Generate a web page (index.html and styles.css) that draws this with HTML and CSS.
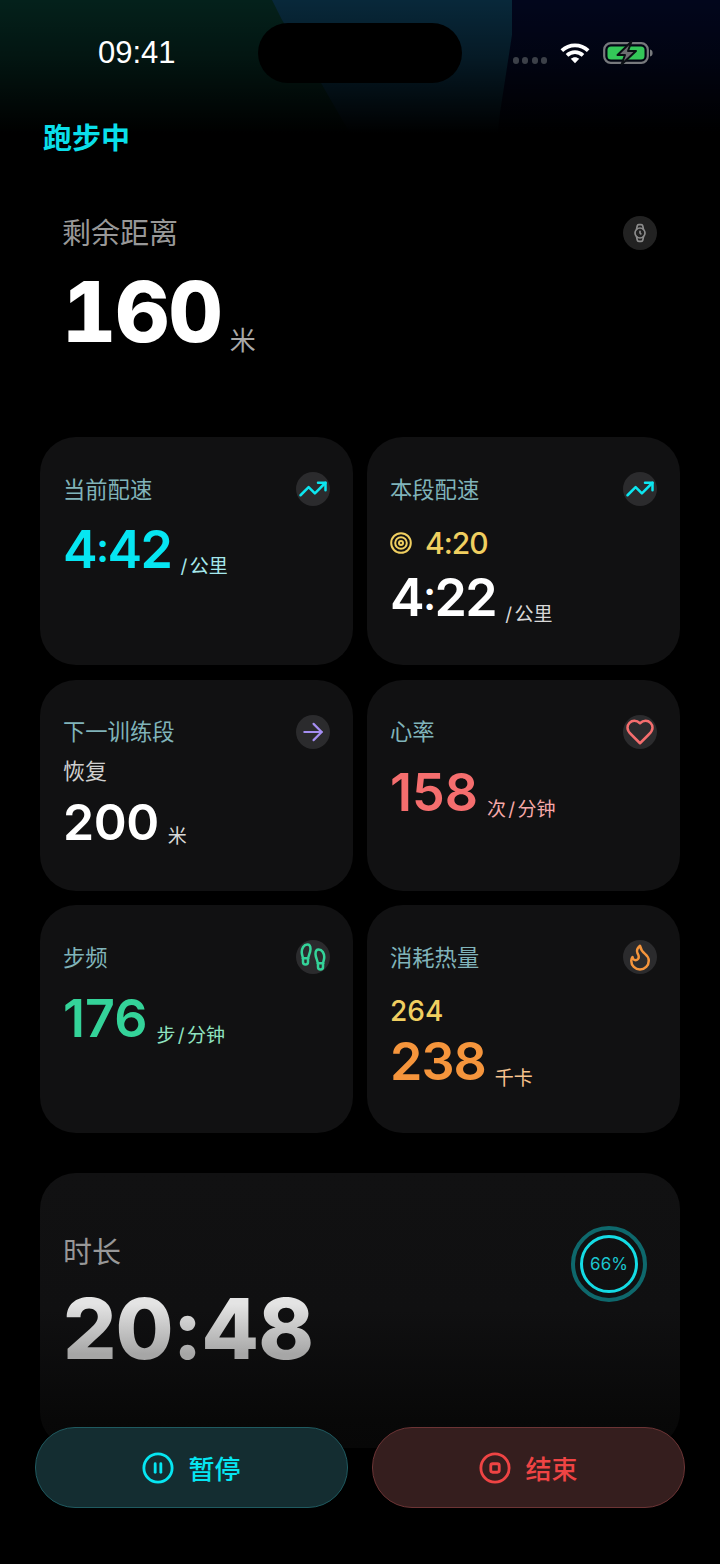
FILE: index.html
```html
<!DOCTYPE html>
<html lang="zh-CN">
<head>
    <meta charset="UTF-8">
    <title>跑步中</title>
    <link rel="stylesheet" href="styles.css">
</head>
<body>
<div class="app">
    <!--顶部背景-->
    <div class="glow"><div class="glow-mid"></div><div class="glow-fade"></div></div>

    <div class="status">
        <span class="time">09:41</span>
        <div class="island"></div>
        <div class="status-right">
            <div class="dots"><i></i><i></i><i></i><i></i></div>
            <svg class="wifi" width="32" height="24" viewBox="0 0 34 24">
                <path d="M3 9.500C11 2 23 2 31 9.500" />
                <path d="M8.500 14.500C13.500 10 20.500 10 25.500 14.500" />
                <path class="wifi-tip" d="M12.500 18.200C15.200 15.800 18.800 15.800 21.500 18.200L17 23Z" />
            </svg>
            <svg class="battery" width="50" height="26" viewBox="0 0 50 26">
                <rect x="1.200" y="3.200" width="43.600" height="19.600" rx="6.500" fill="none" stroke="#77797c" stroke-width="2.200" />
                <rect x="4.500" y="6.500" width="37" height="13" rx="3.500" fill="#34c759" />
                <path d="M47 9.500c2 .6 2.600 1.800 2.600 3.500s-.6 2.900-2.600 3.500z" fill="#77797c" />
                <path d="M28.500 1.500L14.500 15h7.500l-3.500 9.500L33 11h-8z" fill="#6c6e70" stroke="#0b0f14" stroke-width="2" stroke-linejoin="round" />
            </svg>
        </div>
    </div>

    <h1 class="title">跑步中</h1>

    <section class="hero">
        <div class="hero-head">
            <span class="hero-label">剩余距离</span>
            <span class="ico ico-dim">
                <svg width="20" height="20" viewBox="0 0 24 24" class="line line-gray"><circle cx="12" cy="12" r="6"/><path d="M12 10v2l1 1"/><path d="M16.130 7.660l-.81-4.050a2 2 0 0 0-2-1.610h-2.680a2 2 0 0 0-2 1.610l-.78 4.050"/><path d="M7.880 16.360l.8 4a2 2 0 0 0 2 1.610h2.720a2 2 0 0 0 2-1.610l.81-4.050"/></svg>
            </span>
        </div>
        <div class="hero-value"><b>160</b><span>米</span></div>
    </section>

    <div class="grid">
        <div class="card">
            <div class="card-head">
                <span class="label">当前配速</span>
                <span class="ico"><svg width="30" height="30" viewBox="0 0 24 24" class="line line-cyan"><path d="M22 7l-8.500 8.500-5-5L2 17"/><path d="M16 7h6v6"/></svg></span>
            </div>
            <div class="val val-tight cyan gap-12">4<i class="colon">:</i>42<small class="cyan-soft">/ 公里</small></div>
        </div>
        <div class="card">
            <div class="card-head">
                <span class="label">本段配速</span>
                <span class="ico"><svg width="30" height="30" viewBox="0 0 24 24" class="line line-cyan"><path d="M22 7l-8.500 8.500-5-5L2 17"/><path d="M16 7h6v6"/></svg></span>
            </div>
            <div class="target">
                <svg width="22" height="22" viewBox="0 0 22 22" class="line line-yellow"><circle cx="11" cy="11" r="9.800"/><circle cx="11" cy="11" r="5.800"/><circle cx="11" cy="11" r="2"/></svg>
                <span>4:20</span>
            </div>
            <div class="val val-tight white gap-5">4<i class="colon">:</i>22<small class="white-soft">/ 公里</small></div>
        </div>
        <div class="card">
            <div class="card-head">
                <span class="label">下一训练段</span>
                <span class="ico"><svg width="26" height="26" viewBox="0 0 24 24" class="line line-purple"><path d="M4 12h16"/><path d="M12.500 4.500L20 12l-7.500 7.500"/></svg></span>
            </div>
            <div class="next-name">恢复</div>
            <div class="val val-next white">200<small class="white-soft">米</small></div>
        </div>
        <div class="card">
            <div class="card-head">
                <span class="label">心率</span>
                <span class="ico"><svg width="30" height="30" viewBox="0 0 24 24" class="line line-red"><path d="M19 14c1.490-1.460 3-3.210 3-5.500A5.500 5.500 0 0 0 16.500 3c-1.760 0-3 .5-4.500 2-1.500-1.500-2.740-2-4.500-2A5.500 5.500 0 0 0 2 8.500c0 2.300 1.500 4.050 3 5.500l7 7Z"/></svg></span>
            </div>
            <div class="val red gap-14">158<small class="red-soft">次 / 分钟</small></div>
        </div>
        <div class="card">
            <div class="card-head">
                <span class="label">步频</span>
                <span class="ico"><svg width="30" height="30" viewBox="0 0 24 24" class="line line-green"><path d="M4 16v-2.380C4 11.500 2.970 10.500 3 8c.03-2.720 1.490-6 4.500-6C9.370 2 10 3.800 10 5.500c0 3.110-2 5.660-2 8.680V16a2 2 0 1 1-4 0Z"/><path d="M20 20v-2.380c0-2.120 1.030-3.120 1-5.620-.03-2.720-1.490-6-4.500-6C14.630 6 14 7.800 14 9.500c0 3.110 2 5.660 2 8.680V20a2 2 0 1 0 4 0Z"/><path d="M16 17h4"/><path d="M4 13h4"/></svg></span>
            </div>
            <div class="val green gap-15">176<small class="green-soft">步 / 分钟</small></div>
        </div>
        <div class="card">
            <div class="card-head">
                <span class="label">消耗热量</span>
                <span class="ico"><svg width="30" height="30" viewBox="0 0 24 24" class="line line-orange"><path d="M8.500 14.500A2.500 2.500 0 0 0 11 12c0-1.380-.5-2-1-3-1.072-2.143-.224-4.054 2-6 .5 2.500 2 4.900 4 6.500 2 1.600 3 3.500 3 5.500a7 7 0 1 1-14 0c0-1.153.433-2.294 1-3a2.500 2.500 0 0 0 2.500 2.500z"/></svg></span>
            </div>
            <div class="goal-kcal">264</div>
            <div class="val val-kcal orange gap-3">238<small class="orange-soft">千卡</small></div>
        </div>
    </div>

    <section class="duration">
        <div class="duration-text">
            <div class="hero-label">时长</div>
            <div class="duration-val">20:48</div>
        </div>
        <div class="ring">
            <svg width="78" height="78" viewBox="0 0 78 78">
                <circle cx="39" cy="39" r="36" fill="none" stroke="#0e686c" stroke-width="4" />
                <circle cx="39" cy="39" r="27.500" fill="none" stroke="#14dbe4" stroke-width="3" />
            </svg>
            <span>66%</span>
        </div>
    </section>

    <!--底部按钮-->
    <div class="actions">
        <div class="btn btn-pause">
            <svg width="32" height="32" viewBox="0 0 34 34" class="line-btn"><circle cx="17" cy="17" r="15"/><path d="M14 12.500v9"/><path d="M20 12.500v9"/></svg>
            <span>暂停</span>
        </div>
        <div class="btn btn-stop">
            <svg width="32" height="32" viewBox="0 0 34 34" class="line-btn"><circle cx="17" cy="17" r="15"/><rect x="12.500" y="12.500" width="9" height="9" rx="2"/></svg>
            <span>结束</span>
        </div>
    </div>
</div>
</body>
</html>
```

FILE: styles.css
```css
* {
    padding: 0;
    margin: 0;
    box-sizing: border-box;
}

body {
    background: #000;
    font-family: "Inter", "Noto Sans CJK SC", sans-serif;
    color: #fff;
}

.app {
    width: 720px;
    height: 1564px;
    position: relative;
    overflow: hidden;
}

.glow {
    position: absolute;
    left: 0;
    top: 0;
    width: 720px;
    height: 140px;
    background: linear-gradient(to right, #04211b 0, #04211b 400px, #02061c 400px, #02061c 720px);
}

.glow-mid {
    position: absolute;
    inset: 0;
    background: #08283a;
    clip-path: polygon(272px 0, 512px 0, 512px 35px, 500px 113px, 497px 140px, 355px 140px, 344px 123px, 321px 83px, 282px 20px);
}

.glow-fade {
    position: absolute;
    inset: 0;
    background: linear-gradient(to bottom, rgba(0, 0, 0, 0) 0, rgba(0, 0, 0, .35) 40%, #000 95%);
}

.status {
    position: relative;
    display: flex;
    align-items: center;
    height: 60px;
    margin-top: 23px;
    padding: 0 67px 0 98px;
}

.time {
    font-family: "Liberation Sans", sans-serif;
    font-size: 31px;
}

.island {
    position: absolute;
    left: 258px;
    top: 0;
    width: 204px;
    height: 60px;
    border-radius: 30px;
    background: #000;
}

.status-right {
    display: flex;
    align-items: center;
    margin-left: auto;
}

.dots {
    display: flex;
    gap: 3.500px;
    margin: 14px 12px 0 0;
}

.dots i {
    width: 6px;
    height: 7px;
    border-radius: 3px;
    background: #3c4048;
}

.wifi {
    margin-right: 12px;
}

.wifi path {
    fill: none;
    stroke: #fff;
    stroke-width: 4;
}

.wifi .wifi-tip {
    fill: #fff;
    stroke: none;
}

.title {
    position: relative;
    margin-top: 36px;
    padding-left: 43px;
    font-size: 29px;
    line-height: 40px;
    font-weight: 700;
    color: #0adfea;
}

.hero {
    margin-top: 57px;
    padding: 0 63px 0 62px;
}

.hero-head {
    display: flex;
    justify-content: space-between;
    align-items: center;
    height: 34px;
}

.hero-label {
    margin-top: 2px;
    font-size: 29px;
    line-height: 40px;
    color: #989898;
}

.hero-value {
    display: flex;
    align-items: flex-end;
    margin-top: 20px;
}

.hero-value b {
    font-size: 84px;
    line-height: 84px;
    font-weight: 800;
    font-feature-settings: "tnum";
    letter-spacing: -1px;
}

.hero-value span {
    margin-left: 8px;
    font-size: 26px;
    line-height: 26px;
    color: #a8a8a8;
}

.ico {
    display: flex;
    align-items: center;
    justify-content: center;
    width: 34px;
    height: 34px;
    border-radius: 50%;
    background: #2b2b2d;
}

.ico-dim {
    background: #222;
}

.line {
    fill: none;
    stroke-width: 2;
    stroke-linecap: round;
    stroke-linejoin: round;
}

.line-gray { stroke: #8c8c8c; }
.line-cyan { stroke: #0ce6f0; }
.line-yellow { stroke: #f0cf60; }
.line-purple { stroke: #a58ef2; }
.line-red { stroke: #f56e6e; }
.line-green { stroke: #34d399; }
.line-orange { stroke: #f5953c; }

.grid {
    display: grid;
    grid-template-columns: 313px 313px;
    grid-template-rows: 228px 211px 228px;
    column-gap: 14px;
    row-gap: 14.500px;
    margin-top: 83px;
    padding: 0 40px;
}

.card {
    padding: 35px 23px 0 23px;
    border-radius: 36px;
    background: #111112;
}

.card-head {
    display: flex;
    justify-content: space-between;
    align-items: center;
    height: 34px;
}

.label {
    margin-bottom: 3px;
    font-size: 22.300px;
    color: #80b4ba;
}

.val {
    display: flex;
    align-items: flex-end;
    font-size: 52px;
    line-height: 60px;
    font-weight: 600;
}

.val small {
    margin-left: 9px;
    font-size: 19px;
    line-height: 26px;
    font-weight: 400;
    letter-spacing: 0;
    word-spacing: -3px;
    white-space: nowrap;
}

.val-tight {
    letter-spacing: -1.500px;
}

.val-kcal {
    letter-spacing: -1px;
}

.colon {
    margin-bottom: 2px;
    font-size: 40px;
    font-style: normal;
}

.gap-3 { margin-top: 3px; }
.gap-5 { margin-top: 5px; }
.gap-12 { margin-top: 12px; }
.gap-14 { margin-top: 14px; }
.gap-15 { margin-top: 15px; }

.cyan { color: #06e6f2; }
.white { color: #fff; }
.red { color: #f56e6e; }
.green { color: #34d399; }
.orange { color: #f5953c; }
.cyan-soft { color: #a5e8ec; }
.white-soft { color: #d8d8d8; }
.red-soft { color: #f6a8a8; }
.green-soft { color: #8fe3c0; }
.orange-soft { color: #f8c48f; }

.target {
    display: flex;
    align-items: center;
    gap: 13px;
    margin-top: 19px;
    font-size: 30px;
    line-height: 36px;
    font-weight: 500;
    letter-spacing: -1px;
    color: #f0cf60;
}

.next-name {
    margin-top: 7px;
    font-size: 22px;
    line-height: 30px;
    color: #cfcfcf;
}

.val-next {
    margin-top: 8px;
    font-size: 50px;
    line-height: 56px;
    letter-spacing: -.5px;
}

.goal-kcal {
    margin-top: 19px;
    font-size: 28px;
    line-height: 36px;
    font-weight: 500;
    color: #f0cf60;
}

.duration {
    display: flex;
    justify-content: space-between;
    align-items: flex-start;
    height: 275px;
    margin: 40px 40px 0;
    padding: 52px 32px 0 23px;
    border-radius: 36px;
    background: linear-gradient(to bottom, #111112 0, #101011 50%, #080808 90%, #070707 100%);
}

.duration-text {
    margin-top: 6px;
}

.duration-val {
    margin-top: 14px;
    font-size: 84px;
    line-height: 84px;
    font-weight: 800;
    letter-spacing: -1px;
    background: linear-gradient(to bottom, #e4e4e4 20%, #a6a6a6 80%);
    -webkit-background-clip: text;
    background-clip: text;
    color: transparent;
}

.ring {
    position: relative;
    width: 78px;
    height: 78px;
}

.ring span {
    position: absolute;
    inset: 0;
    display: flex;
    align-items: center;
    justify-content: center;
    font-size: 17px;
    color: #1bc6cf;
}

.actions {
    position: absolute;
    left: 35px;
    top: 1427px;
    display: flex;
    gap: 24px;
}

.btn {
    display: flex;
    align-items: center;
    justify-content: center;
    gap: 14px;
    width: 313px;
    height: 81px;
    border-radius: 40px;
    font-size: 26px;
    font-weight: 500;
}

.btn-pause {
    background: #142d31;
    border: 1px solid #1f5a60;
    color: #06e6f2;
}

.btn-stop {
    background: #351e1e;
    border: 1px solid #6c3435;
    color: #ef4444;
}

.line-btn {
    fill: none;
    stroke: currentColor;
    stroke-width: 3;
    stroke-linecap: round;
}
```
